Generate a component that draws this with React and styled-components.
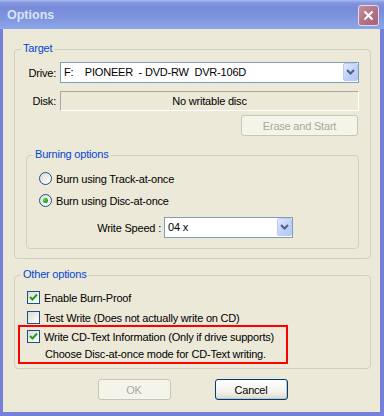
import React from 'react';
import styled, { createGlobalStyle } from 'styled-components';

const GlobalStyle = createGlobalStyle`
  html,
  body {
    margin: 0;
    padding: 0;
    background: #ffffff;
  }

  body {
    font-family: 'Liberation Sans', Arial, sans-serif;
    font-size: 11px;
    letter-spacing: -0.2px;
    color: #000000;
  }
`;

const StyledWindow = styled.div`
  width: 384px;
  height: 416px;
  box-sizing: border-box;
  display: flex;
  flex-direction: column;
  background: #7480da;
`;

const TitleBar = styled.div`
  flex: none;
  height: 29px;
  box-sizing: border-box;
  padding: 1px 5px 0 7px;
  display: flex;
  align-items: center;
  justify-content: space-between;
  background: linear-gradient(
    180deg,
    #a7b8ef 0px,
    #8496de 3px,
    #788bd9 8px,
    #7f95de 18px,
    #8ba5e9 28px
  );

  .title {
    font-size: 12.5px;
    font-weight: bold;
    letter-spacing: 0;
    color: #d9e3f8;
  }
`;

const CloseButton = styled.div`
  width: 21px;
  height: 21px;
  box-sizing: border-box;
  display: flex;
  align-items: center;
  justify-content: center;
  border: 1px solid #e6dbe6;
  border-radius: 3px;
  background: linear-gradient(135deg, #c78e9e 0%, #b07285 55%, #a46478 100%);
`;

const Client = styled.div`
  flex: 1;
  margin: 0 4px 4px 3px;
  padding: 20px 9px 0 11px;
  display: flex;
  flex-direction: column;
  background: #ece9d8;
`;

const Group = styled.div`
  position: relative;
  box-sizing: border-box;
  border: 1px solid #d0d0bf;
  border-radius: 4px;
  margin: ${({ $margin }) => $margin || '0'};
  padding: ${({ $padding }) => $padding || '0'};
  display: flex;
  flex-direction: column;

  .caption {
    position: absolute;
    top: -8px;
    left: 6px;
    padding: 0 2px;
    line-height: 13px;
    color: #0046d5;
    background: #ece9d8;
  }
`;

const FieldRow = styled.div`
  display: grid;
  grid-template-columns: 30px 299px;
  column-gap: 4px;
  align-items: center;
  margin-top: ${({ $gap }) => $gap || 0}px;

  label {
    text-align: right;
  }
`;

const Combo = styled.div`
  width: ${({ $width }) => $width}px;
  height: 21px;
  box-sizing: border-box;
  display: flex;
  align-items: stretch;
  border: 1px solid #7f9db9;
  background: #ffffff;

  .value {
    flex: 1;
    padding-left: 3px;
    line-height: 19px;
    white-space: pre;
  }
`;

const DropButton = styled.div`
  width: 15px;
  margin: 0 0 1px 0;
  box-sizing: border-box;
  display: flex;
  align-items: center;
  justify-content: center;
  border: 1px solid #b9ccf6;
  border-radius: 2px;
  background: linear-gradient(135deg, #e1e9fd 0%, #c3d4fb 50%, #b3c7f5 100%);
`;

const StaticField = styled.div`
  height: 20px;
  box-sizing: border-box;
  display: flex;
  align-items: center;
  justify-content: center;
  border-top: 1px solid #aca899;
  border-left: 1px solid #aca899;
  border-right: 1px solid #ffffff;
  border-bottom: 1px solid #ffffff;
`;

const PushButton = styled.div`
  width: ${({ $width }) => $width}px;
  height: 21px;
  box-sizing: border-box;
  display: flex;
  align-items: center;
  justify-content: center;
  border-radius: 3px;
  border: 1px solid ${({ $disabled }) => ($disabled ? '#c9c7ba' : '#003c74')};
  color: ${({ $disabled }) => ($disabled ? '#aca899' : '#000000')};
  background: ${({ $disabled }) =>
    $disabled
      ? '#f5f4ea'
      : 'linear-gradient(180deg, #ffffff 0%, #f4f3ee 60%, #e3e0d4 90%, #d6d0c5 100%)'};
  box-shadow: ${({ $disabled }) => ($disabled ? 'none' : 'inset -1px -1px 0 #c0c6d6')};
`;

const EraseRow = styled.div`
  display: flex;
  justify-content: flex-end;
  margin: 4px 1px 0 0;
`;

const OptionRow = styled.div`
  display: flex;
  align-items: center;
  height: 13px;
  gap: 4px;
  margin-top: ${({ $gap }) => $gap || 0}px;
`;

const Radio = styled.div`
  width: 13px;
  height: 13px;
  box-sizing: border-box;
  border-radius: 50%;
  border: 1px solid #1c5180;
  display: flex;
  align-items: center;
  justify-content: center;
  background: linear-gradient(135deg, #dcdcd7 0%, #f0efea 55%, #ffffff 100%);

  &::after {
    content: '';
    display: ${({ $checked }) => ($checked ? 'block' : 'none')};
    width: 5px;
    height: 5px;
    border-radius: 50%;
    background: radial-gradient(circle at 35% 35%, #55d551 0%, #21a121 60%, #1a8d1a 100%);
  }
`;

const CheckBox = styled.div`
  flex: none;
  width: 13px;
  height: 13px;
  box-sizing: border-box;
  border: 1px solid #1c5180;
  display: flex;
  align-items: center;
  justify-content: center;
  background: linear-gradient(135deg, #dcdcd7 0%, #f0efea 55%, #ffffff 100%);
`;

const SpeedRow = styled.div`
  display: flex;
  align-items: center;
  margin-top: 10px;

  label {
    width: 122px;
    margin-right: 3px;
    text-align: right;
  }
`;

const Highlight = styled.div`
  width: 270px;
  box-sizing: border-box;
  margin: 1px 0 0 -9px;
  padding: 3px 0 1px 7px;
  border: 2px solid #ff0000;

  .note {
    margin: 4px 0 0 18px;
    line-height: 14px;
  }
`;

const ButtonBar = styled.div`
  display: flex;
  justify-content: center;
  gap: 44px;
  margin-top: 10px;
`;

const Chevron = () => (
  <svg width="9" height="6" viewBox="0 0 9 6">
    <path d="M1 1 L4.5 4.5 L8 1" fill="none" stroke="#4d6185" strokeWidth="2" />
  </svg>
);

const Check = () => (
  <svg width="9" height="9" viewBox="0 0 9 9">
    <path d="M1 4 L3.5 6.5 L8 1.5" fill="none" stroke="#21a121" strokeWidth="2" />
  </svg>
);

const Option = ({ type, checked, gap, children }) => (
  <OptionRow $gap={gap}>
    {type === 'radio' ? (
      <Radio $checked={checked} />
    ) : (
      <CheckBox>{checked && <Check />}</CheckBox>
    )}
    <span>{children}</span>
  </OptionRow>
);

const App = () => (
  <>
    <GlobalStyle />
    <StyledWindow>
      <TitleBar>
        <span className="title">Options</span>
        <CloseButton>
          <svg width="11" height="11" viewBox="0 0 11 11">
            <path d="M1.5 1.5 L9.5 9.5 M9.5 1.5 L1.5 9.5" stroke="#ffffff" strokeWidth="2" />
          </svg>
        </CloseButton>
      </TitleBar>

      <Client>
        <Group $padding="12px 11px 9px 11px">
          <span className="caption">Target</span>

          <FieldRow>
            <label>Drive:</label>
            <Combo $width={299}>
              <span className="value">{'F:    PIONEER  - DVD-RW  DVR-106D'}</span>
              <DropButton>
                <Chevron />
              </DropButton>
            </Combo>
          </FieldRow>

          <FieldRow $gap={8}>
            <label>Disk:</label>
            <StaticField>No writable disc</StaticField>
          </FieldRow>

          <EraseRow>
            <PushButton $width={117} $disabled>
              Erase and Start
            </PushButton>
          </EraseRow>

          <Group $margin="19px 0 0 0" $padding="16px 12px 10px 12px">
            <span className="caption">Burning options</span>
            <Option type="radio">Burn using Track-at-once</Option>
            <Option type="radio" checked gap={9}>
              Burn using Disc-at-once
            </Option>
            <SpeedRow>
              <label>Write Speed :</label>
              <Combo $width={129}>
                <span className="value">04 x</span>
                <DropButton>
                  <Chevron />
                </DropButton>
              </Combo>
            </SpeedRow>
          </Group>
        </Group>

        <Group $margin="16px 0 0 0" $padding="15px 12px 4px 12px">
          <span className="caption">Other options</span>
          <Option checked>Enable Burn-Proof</Option>
          <Option gap={7}>Test Write (Does not actually write on CD)</Option>
          <Highlight>
            <Option checked>Write CD-Text Information (Only if drive supports)</Option>
            <div className="note">Choose Disc-at-once mode for CD-Text writing.</div>
          </Highlight>
        </Group>

        <ButtonBar>
          <PushButton $width={73} $disabled>
            OK
          </PushButton>
          <PushButton $width={73}>Cancel</PushButton>
        </ButtonBar>
      </Client>
    </StyledWindow>
  </>
);

export default App;
